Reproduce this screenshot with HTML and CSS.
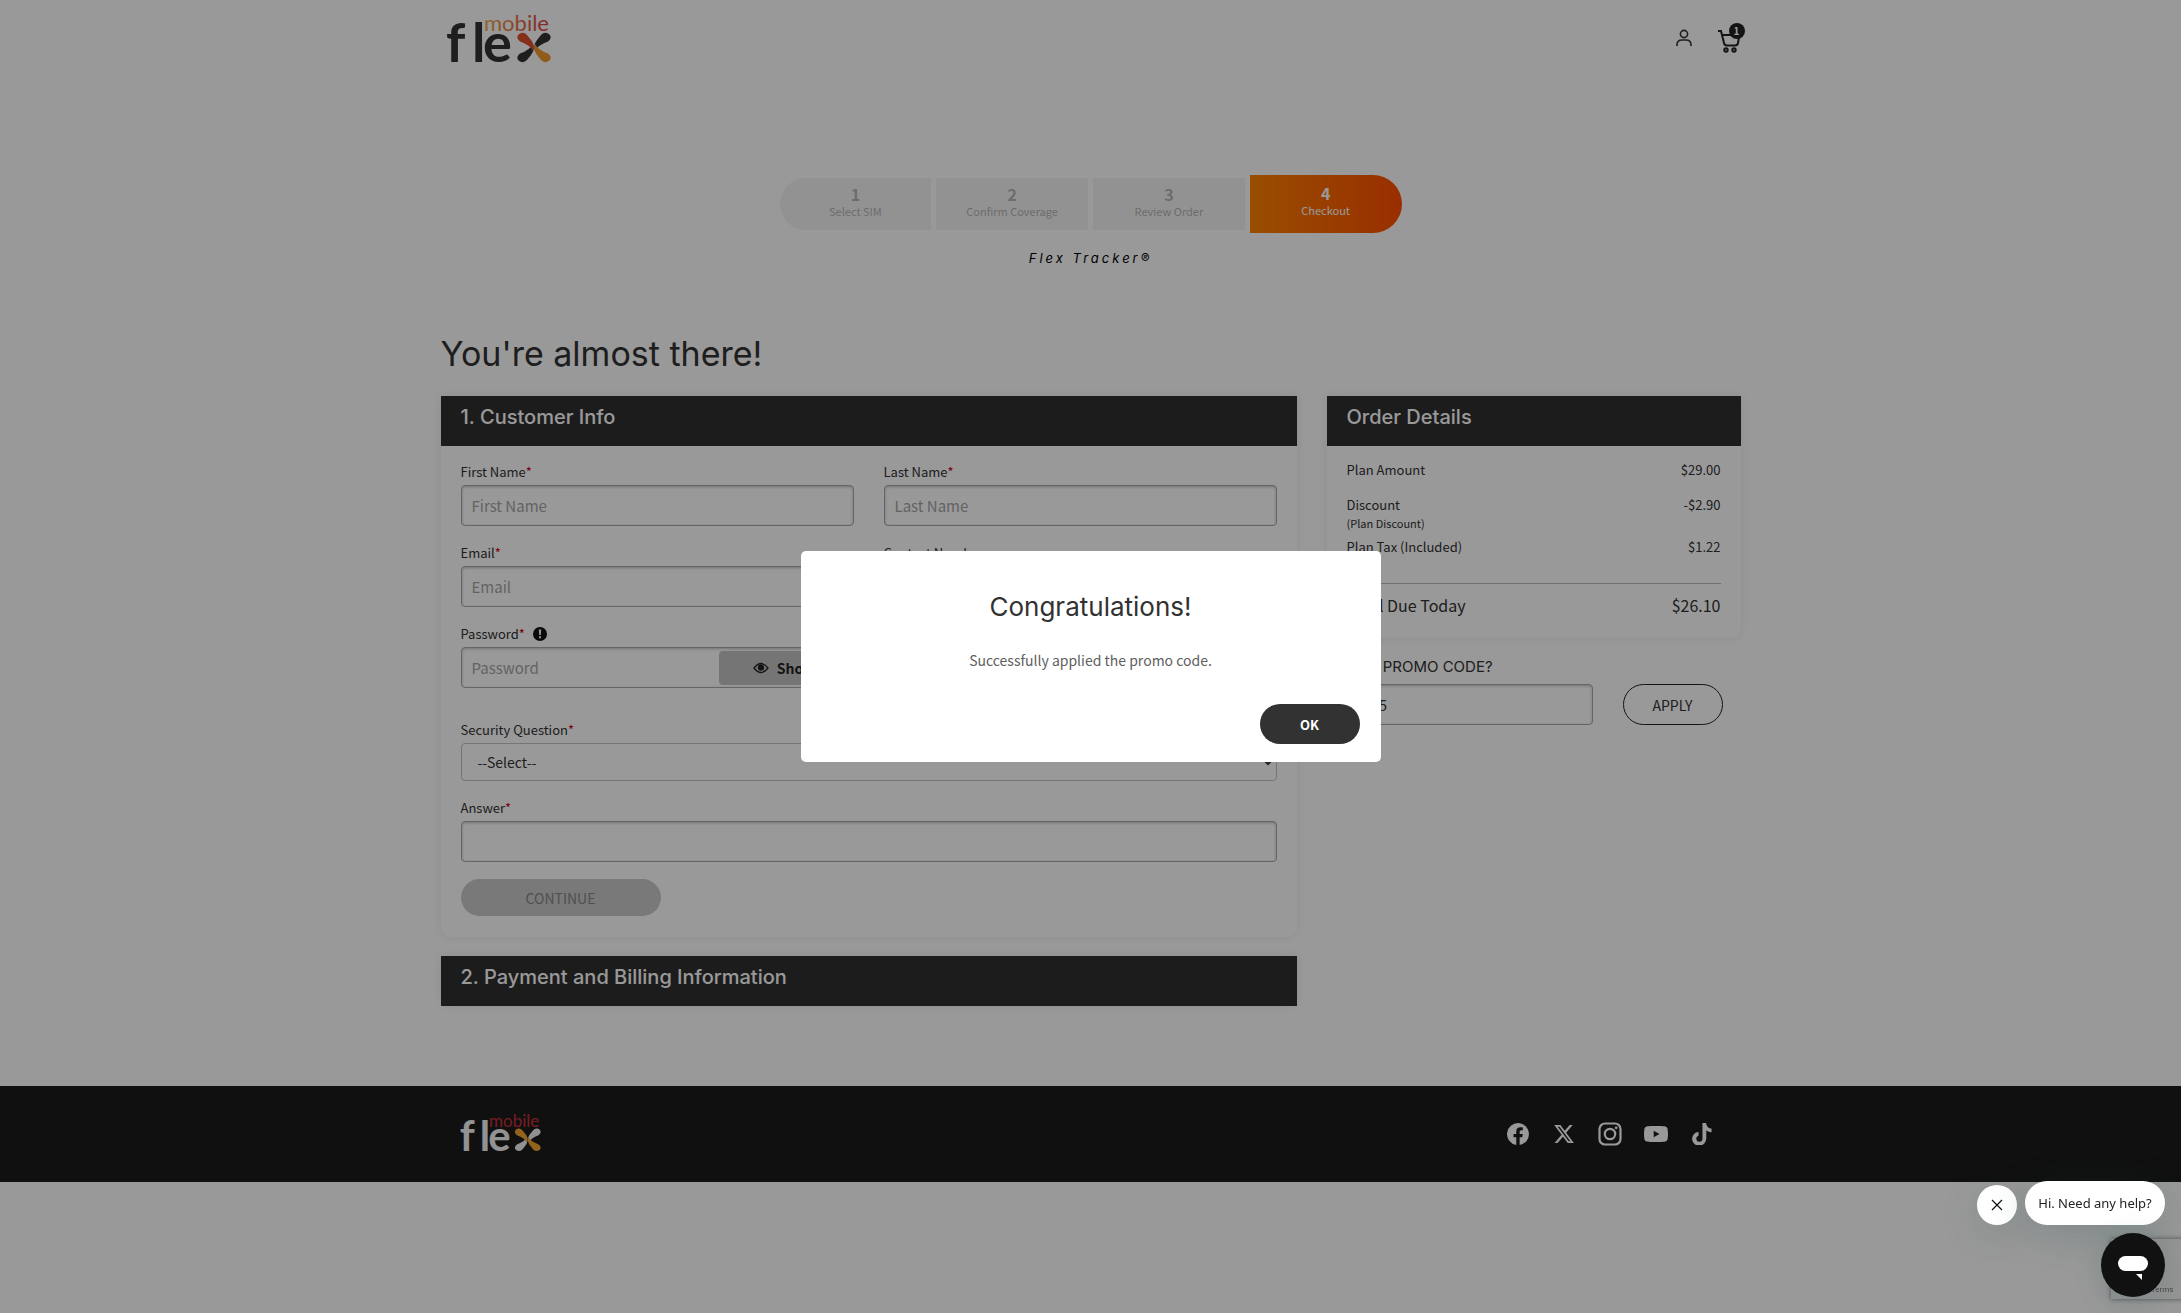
FILE: index.html
```html
<!DOCTYPE html>
<html lang="en">
<head>
    <meta charset="UTF-8">
    <meta name="viewport" content="width=device-width, initial-scale=1.0">
    <title>Checkout - Flex Mobile</title>
    <link rel="stylesheet" href="styles.css">
</head>
<body>
    <header class="site-header container">
        <a href="#" class="logo" aria-label="Flex Mobile">
            <svg width="110" height="72" viewBox="-2 -10 110 72">
                <defs>
                    <linearGradient id="mobileGradient" x1="0" x2="1">
                        <stop offset="0" stop-color="#f0a848"/>
                        <stop offset="1" stop-color="#d8424a"/>
                    </linearGradient>
                    <path id="petal" d="M71.500 20.500Q76 17 80 21L84 26Q88 31 86 37Q83 31 73 27.500Q68.500 24 71.500 20.500z"/>
                </defs>
                <text class="logo-word" x="-1 25 36" y="48">fle</text>
                <text class="logo-mobile" x="37" y="17" fill="url(#mobileGradient)">mobile</text>
                <use href="#petal" fill="#323232" transform="matrix(1 0 0 -1 0 67)"/>
                <use href="#petal" fill="#323232" transform="matrix(-1 0 0 1 174 0)"/>
                <use href="#petal" fill="#e0512f"/>
                <use href="#petal" fill="#f29a2e" transform="matrix(-1 0 0 -1 174 67)"/>
            </svg>
        </a>
        <nav class="header-links">
            <a href="#" aria-label="Account">
                <svg width="18" height="18" viewBox="0 0 18 18" fill="none" stroke="#323232" stroke-width="1.6">
                    <circle cx="9" cy="5" r="3.6"/>
                    <path d="M2 17v-1q0-5 5-5h4q5 0 5 5v1"/>
                </svg>
            </a>
            <a href="#" class="cart" aria-label="Cart">
                <svg width="24" height="24" viewBox="0 0 24 24" fill="none" stroke="#222" stroke-width="2">
                    <path d="M1 2h3l1 4 2 8q.6 2.500 3 2.500h8q2.500 0 3-2.500l1.500-8H5"/>
                    <circle cx="9" cy="21" r="1.700"/>
                    <circle cx="17" cy="21" r="1.700"/>
                </svg>
                <span class="cart-count">1</span>
            </a>
        </nav>
    </header>

    <main class="container">
        <ol class="steps">
            <li><strong>1</strong>Select SIM</li>
            <li><strong>2</strong>Confirm Coverage</li>
            <li><strong>3</strong>Review Order</li>
            <li class="active"><strong>4</strong>Checkout</li>
        </ol>
        <p class="tracker">Flex Tracker®</p>

        <h1>You're almost there!</h1>

        <div class="columns">
            <div>
                <section class="card">
                    <h2>1. Customer Info</h2>
                    <form class="card-body customer-form">
                        <div class="field">
                            <label for="firstName">First Name<span class="req">*</span></label>
                            <input type="text" id="firstName" placeholder="First Name">
                        </div>
                        <div class="field">
                            <label for="lastName">Last Name<span class="req">*</span></label>
                            <input type="text" id="lastName" placeholder="Last Name">
                        </div>
                        <div class="field">
                            <label for="email">Email<span class="req">*</span></label>
                            <input type="email" id="email" placeholder="Email">
                        </div>
                        <div class="field">
                            <label for="contact">Contact Number</label>
                            <input type="tel" id="contact" placeholder="Contact Number">
                        </div>
                        <div class="field">
                            <label for="password">Password<span class="req">*</span>
                                <svg class="info" width="14" height="14" viewBox="0 0 14 14">
                                    <circle cx="7" cy="7" r="7" fill="#111"/>
                                    <path d="M5.800 2.500h2.400l-.4 5.500h-1.600zM6 9.200h2v2h-2z" fill="#fff"/>
                                </svg>
                            </label>
                            <div class="password">
                                <input type="password" id="password" placeholder="Password">
                                <button type="button" class="show">
                                    <svg width="16" height="12" viewBox="0 0 16 12">
                                        <path d="M1 6q7-9 14 0q-7 9-14 0z" fill="none" stroke="#222" stroke-width="1.300"/>
                                        <circle cx="8" cy="5.500" r="3.200" fill="#222"/>
                                    </svg>
                                    Show
                                </button>
                            </div>
                        </div>
                        <div class="field wide security">
                            <label for="question">Security Question<span class="req">*</span></label>
                            <select id="question">
                                <option>--Select--</option>
                            </select>
                        </div>
                        <div class="field wide">
                            <label for="answer">Answer<span class="req">*</span></label>
                            <input type="text" id="answer">
                        </div>
                        <button type="button" class="continue" disabled>CONTINUE</button>
                    </form>
                </section>
                <section class="card">
                    <h2>2. Payment and Billing Information</h2>
                </section>
            </div>

            <aside>
                <section class="card order">
                    <h2>Order Details</h2>
                    <div class="card-body">
                        <table>
                            <tbody>
                                <tr><td>Plan Amount</td><td>$29.00</td></tr>
                                <tr class="discount"><td>Discount<small>(Plan Discount)</small></td><td>-$2.90</td></tr>
                                <tr><td>Plan Tax (Included)</td><td>$1.22</td></tr>
                            </tbody>
                            <tfoot>
                                <tr><td>Total Due Today</td><td>$26.10</td></tr>
                            </tfoot>
                        </table>
                    </div>
                </section>
                <form class="promo">
                    <label for="promo">ADD PROMO CODE?</label>
                    <div class="promo-row">
                        <input type="text" id="promo" value="FIX5">
                        <button type="button">APPLY</button>
                    </div>
                </form>
            </aside>
        </div>
    </main>

    <footer class="site-footer">
        <div class="container">
            <a href="#" class="logo" aria-label="Flex Mobile">
                <svg width="85" height="56" viewBox="-2 -10 110 72">
                    <text class="logo-word" x="-1 25 36" y="48">fle</text>
                    <text class="logo-mobile" x="37" y="17">mobile</text>
                    <use href="#petal" fill="#f4f0f4" transform="matrix(1 0 0 -1 0 67)"/>
                    <use href="#petal" fill="#f4f0f4" transform="matrix(-1 0 0 1 174 0)"/>
                    <use href="#petal" fill="#f2a52e"/>
                    <use href="#petal" fill="#f2a52e" transform="matrix(-1 0 0 -1 174 67)"/>
                </svg>
            </a>
            <nav class="social">
                <a href="#" aria-label="Facebook">
                    <svg width="22" height="22" viewBox="0 0 24 24"><path d="M24 12a12 12 0 1 0-13.900 11.900v-8.400H7.100V12h3V9.400c0-3 1.800-4.700 4.500-4.700 1.300 0 2.700.2 2.700.2v3h-1.500c-1.500 0-2 .9-2 1.900V12h3.400l-.5 3.500h-2.900v8.400A12 12 0 0 0 24 12z"/></svg>
                </a>
                <a href="#" aria-label="X">
                    <svg width="22" height="22" viewBox="0 0 24 24"><path d="M18.200 2.200h3.300l-7.200 8.300 8.500 11.200h-6.700l-5.200-6.800-6 6.800H1.700l7.700-8.800L1.300 2.200h6.800l4.700 6.200zm-1.100 17.600h1.800L7.100 4.100h-2z"/></svg>
                </a>
                <a href="#" aria-label="Instagram">
                    <svg width="24" height="24" viewBox="0 0 24 24"><path fill="none" stroke="#fff" stroke-width="2.200" d="M7 1.500h10a5.500 5.500 0 0 1 5.500 5.500v10a5.500 5.500 0 0 1-5.500 5.500H7A5.500 5.500 0 0 1 1.500 17V7A5.500 5.500 0 0 1 7 1.500zM12 6.800a5.200 5.200 0 1 0 0 10.400 5.200 5.200 0 0 0 0-10.400z"/><circle cx="18.200" cy="5.800" r="1.400"/></svg>
                </a>
                <a href="#" aria-label="YouTube">
                    <svg width="26" height="26" viewBox="0 0 24 24"><path d="M23.500 6.500a3 3 0 0 0-2.100-2.100C19.500 3.900 12 3.900 12 3.900s-7.500 0-9.400.5A3 3 0 0 0 .5 6.500 31 31 0 0 0 0 12a31 31 0 0 0 .5 5.500 3 3 0 0 0 2.100 2.100c1.900.5 9.400.5 9.400.5s7.500 0 9.400-.5a3 3 0 0 0 2.100-2.100A31 31 0 0 0 24 12a31 31 0 0 0-.5-5.500zM9.700 15.200V8.800l5.800 3.200z"/></svg>
                </a>
                <a href="#" aria-label="TikTok">
                    <svg width="20" height="22" viewBox="1 0 22 24"><path d="M12.500 0h4c.1 1.600.7 3.200 1.800 4.200 1.100 1.100 2.700 1.600 4.200 1.800v4.100c-1.400 0-2.900-.3-4.200-1l-1.600-.9v8.800c-.1 1.400-.5 2.800-1.300 4a7.600 7.600 0 1 1-7.200-11.300v4.200a3.400 3.400 0 1 0 4.300 3.300z"/></svg>
                </a>
            </nav>
        </div>
    </footer>

    <div class="recaptcha">
        <svg width="32" height="32" viewBox="0 0 32 32" fill="none" stroke-width="5">
            <path d="M5 16a11 11 0 0 1 19-8" stroke="#4a90e2"/>
            <path d="M27 5v11h-9" stroke="#1c3aa9"/>
            <path d="M5 16a11 11 0 0 0 19 8" stroke="#ababab"/>
        </svg>
        <small>Privacy - Terms</small>
    </div>

    <div class="overlay">
        <div class="modal" role="dialog" aria-labelledby="modalTitle">
            <h2 id="modalTitle">Congratulations!</h2>
            <p>Successfully applied the promo code.</p>
            <button type="button">OK</button>
        </div>
    </div>

    <div class="chat">
        <div class="chat-message">
            <button type="button" class="chat-close" aria-label="Close message">
                <svg width="12" height="12" viewBox="0 0 12 12" stroke="#111" stroke-width="1.200"><path d="M1 1l10 10M11 1L1 11"/></svg>
            </button>
            <button type="button" class="chat-bubble">Hi. Need any help?</button>
        </div>
        <button type="button" class="chat-launcher" aria-label="Open chat">
            <svg width="64" height="64" viewBox="0 0 64 64" fill="#fff">
                <rect x="17" y="23" width="30" height="15" rx="7.500"/>
                <path d="M35 41h6v6z"/>
            </svg>
        </button>
    </div>
</body>
</html>
```

FILE: styles.css
```css
* {
    box-sizing: border-box;
}

body {
    margin: 0;
    background-color: #fff;
    color: #323232;
    font-family: "Noto Sans CJK SC", sans-serif;
    font-size: 13px;
    line-height: 20px;
}

.container {
    max-width: 1300px;
    margin: 0 auto;
}

input, select, button {
    font-family: inherit;
}

button {
    cursor: pointer;
}

svg {
    display: block;
}

h1, h2 {
    font-family: Inter, sans-serif;
    margin: 0;
}

/* Header */
.site-header {
    display: flex;
    justify-content: space-between;
    padding: 4px 0 0 4px;
    height: 76px;
}

.logo-word {
    font-family: Lato, sans-serif;
    font-size: 54px;
    font-weight: bold;
    fill: #323232;
}

.logo-mobile {
    font-family: Lato, sans-serif;
    font-size: 22px;
}

.header-links {
    display: flex;
    align-items: flex-start;
    gap: 24px;
    padding-top: 25px;
}

.cart {
    position: relative;
}

.cart-count {
    position: absolute;
    top: -6px;
    right: -4px;
    width: 16px;
    height: 16px;
    border-radius: 50%;
    background-color: #222;
    color: #fff;
    font-size: 10px;
    font-weight: bold;
    line-height: 16px;
    text-align: center;
}

/* Progress */
.steps {
    display: grid;
    grid-template-columns: repeat(4, 1fr);
    align-items: center;
    gap: 5px;
    max-width: 622px;
    margin: 99px auto 0;
    padding: 0;
    list-style: none;
}

.steps li {
    padding: 7px 0;
    height: 52px;
    background-color: #f4f4f4;
    color: #b4b4b4;
    font-size: 11px;
    line-height: 16px;
    text-align: center;
}

.steps strong {
    display: block;
    font-size: 16px;
    line-height: 18px;
}

.steps li:first-child {
    border-radius: 26px 0 0 26px;
}

.steps .active {
    height: 58px;
    padding-top: 9px;
    border-radius: 0 29px 29px 0;
    background: linear-gradient(to right, #ff8200, #ff4d00);
    color: #fff;
}

.tracker {
    margin: 15px 0 63px;
    color: #000;
    font-family: Inter, sans-serif;
    font-size: 13px;
    font-style: italic;
    letter-spacing: 3px;
    line-height: 20px;
    text-align: center;
}

h1 {
    margin-bottom: 19px;
    font-size: 34px;
    font-weight: 400;
    line-height: 46px;
}

/* Cards */
.columns {
    display: grid;
    grid-template-columns: minmax(0, 1fr) 414px;
    gap: 30px;
}

.card {
    margin-bottom: 19px;
    border-radius: 0 0 10px 10px;
    box-shadow: 0 0 10px rgba(0, 0, 0, 0.08);
}

.card h2 {
    height: 50px;
    padding: 0 20px;
    background-color: #303030;
    color: #fff;
    font-size: 20px;
    font-weight: 500;
    line-height: 42px;
}

.card-body {
    padding: 16px 20px 21px;
}

.customer-form {
    display: grid;
    grid-template-columns: 1fr 1fr;
    gap: 17px 30px;
}

.wide {
    grid-column: 1 / -1;
}

.security {
    margin-top: 15px;
}

.field label {
    display: flex;
    align-items: center;
    margin-bottom: 3px;
}

.req {
    color: #d0021b;
}

.info {
    margin-left: 8px;
}

input, select {
    display: block;
    width: 100%;
    height: 41px;
    padding: 0 10px;
    border: 1px solid #a8a8a8;
    border-radius: 4px;
    background-color: #fff;
    box-shadow: inset 0 1px 3px rgba(0, 0, 0, 0.25);
    color: #323232;
    font-size: 15px;
}

input::placeholder {
    color: #a6a6a6;
}

select {
    height: 38px;
    padding: 0 12px;
    border-color: #c4c4c4;
    box-shadow: none;
    font-size: 14px;
}

.password {
    position: relative;
}

.show {
    position: absolute;
    top: 4px;
    right: 4px;
    display: flex;
    align-items: center;
    justify-content: center;
    gap: 8px;
    width: 131px;
    height: 34px;
    border: none;
    border-radius: 4px;
    background-color: #c4c4c4;
    color: #222;
    font-size: 14px;
    font-weight: bold;
}

.continue {
    width: 200px;
    height: 37px;
    border: none;
    border-radius: 19px;
    background-color: #cacaca;
    color: #858585;
    font-size: 14px;
}

/* Order details */
.order {
    margin-bottom: 16px;
}

.order .card-body {
    padding: 14px 20px 20px;
}

table {
    width: 100%;
    border-collapse: collapse;
}

td {
    padding: 0 0 15px;
    vertical-align: top;
}

td:last-child {
    text-align: right;
}

.discount td {
    padding-bottom: 5px;
}

td small {
    display: block;
    font-size: 11px;
    line-height: 17px;
}

tbody tr:last-child td {
    padding-bottom: 26px;
}

tfoot td {
    padding: 8px 0 0;
    border-top: 1px solid #bbb;
    font-size: 16px;
    line-height: 26px;
}

.promo {
    padding: 0 18px 0 20px;
}

.promo label {
    display: block;
    margin-bottom: 4px;
    font-family: Inter, sans-serif;
    font-size: 15px;
    line-height: 26px;
}

.promo-row {
    display: flex;
    gap: 30px;
}

.promo-row button {
    flex: none;
    width: 100px;
    height: 41px;
    border: 1px solid #222;
    border-radius: 21px;
    background-color: #fff;
    color: #323232;
    font-size: 14px;
}

/* Footer */
.site-footer {
    margin-top: 61px;
    padding: 20px 0;
    background-color: #1c1c1c;
}

.site-footer .container {
    display: flex;
    align-items: center;
    justify-content: space-between;
    padding: 0 27px 0 18px;
}

.site-footer .logo-word {
    fill: #f4f4f4;
}

.site-footer .logo-mobile {
    fill: #c8303a;
}

.social {
    display: flex;
    gap: 22px;
    fill: #fff;
}

.social a {
    display: flex;
    align-items: center;
    justify-content: center;
    width: 24px;
    height: 26px;
}

.recaptcha {
    position: fixed;
    right: -186px;
    bottom: 14px;
    width: 256px;
    height: 60px;
    padding: 8px;
    background-color: #f9f9f9;
    box-shadow: 0 0 5px #808080;
    color: #777;
    font-family: Roboto, sans-serif;
    line-height: 18px;
}

.recaptcha svg {
    margin-left: 12px;
}

.recaptcha small {
    font-size: 8px;
}

/* Popup */
.overlay {
    position: fixed;
    inset: 0;
    display: flex;
    align-items: center;
    justify-content: center;
    background-color: rgba(0, 0, 0, 0.4);
}

.modal {
    display: flex;
    flex-direction: column;
    align-items: center;
    width: 580px;
    padding: 38px 21px 18px;
    border-radius: 5px;
    background-color: #fff;
}

.modal h2 {
    font-size: 26px;
    font-weight: 400;
    line-height: 36px;
}

.modal p {
    margin: 23px 0 32px;
    color: #606060;
    font-size: 14px;
    line-height: 24px;
}

.modal button {
    align-self: flex-end;
    width: 100px;
    height: 40px;
    border: none;
    border-radius: 20px;
    background-color: #323232;
    color: #fff;
    font-size: 13px;
    font-weight: bold;
}

/* Chat */
.chat {
    position: fixed;
    right: 16px;
    bottom: 16px;
    display: flex;
    flex-direction: column;
    align-items: flex-end;
    gap: 8px;
}

.chat button {
    border: none;
}

.chat-message {
    display: flex;
    align-items: flex-end;
    gap: 8px;
}

.chat-close {
    display: flex;
    align-items: center;
    justify-content: center;
    width: 40px;
    height: 40px;
    border-radius: 50%;
    background-color: #fff;
    box-shadow: 0 10px 40px rgba(23, 73, 77, 0.15);
}

.chat-bubble {
    width: 140px;
    height: 44px;
    padding: 0;
    border-radius: 22px;
    background-color: #fff;
    box-shadow: 0 10px 40px rgba(23, 73, 77, 0.2);
    color: #222;
    font-family: "Noto Sans", sans-serif;
    font-size: 13px;
}

.chat-launcher {
    width: 64px;
    height: 64px;
    padding: 0;
    border-radius: 50%;
    background-color: #111;
    box-shadow: 0 6px 30px rgba(23, 73, 77, 0.2);
}
```
